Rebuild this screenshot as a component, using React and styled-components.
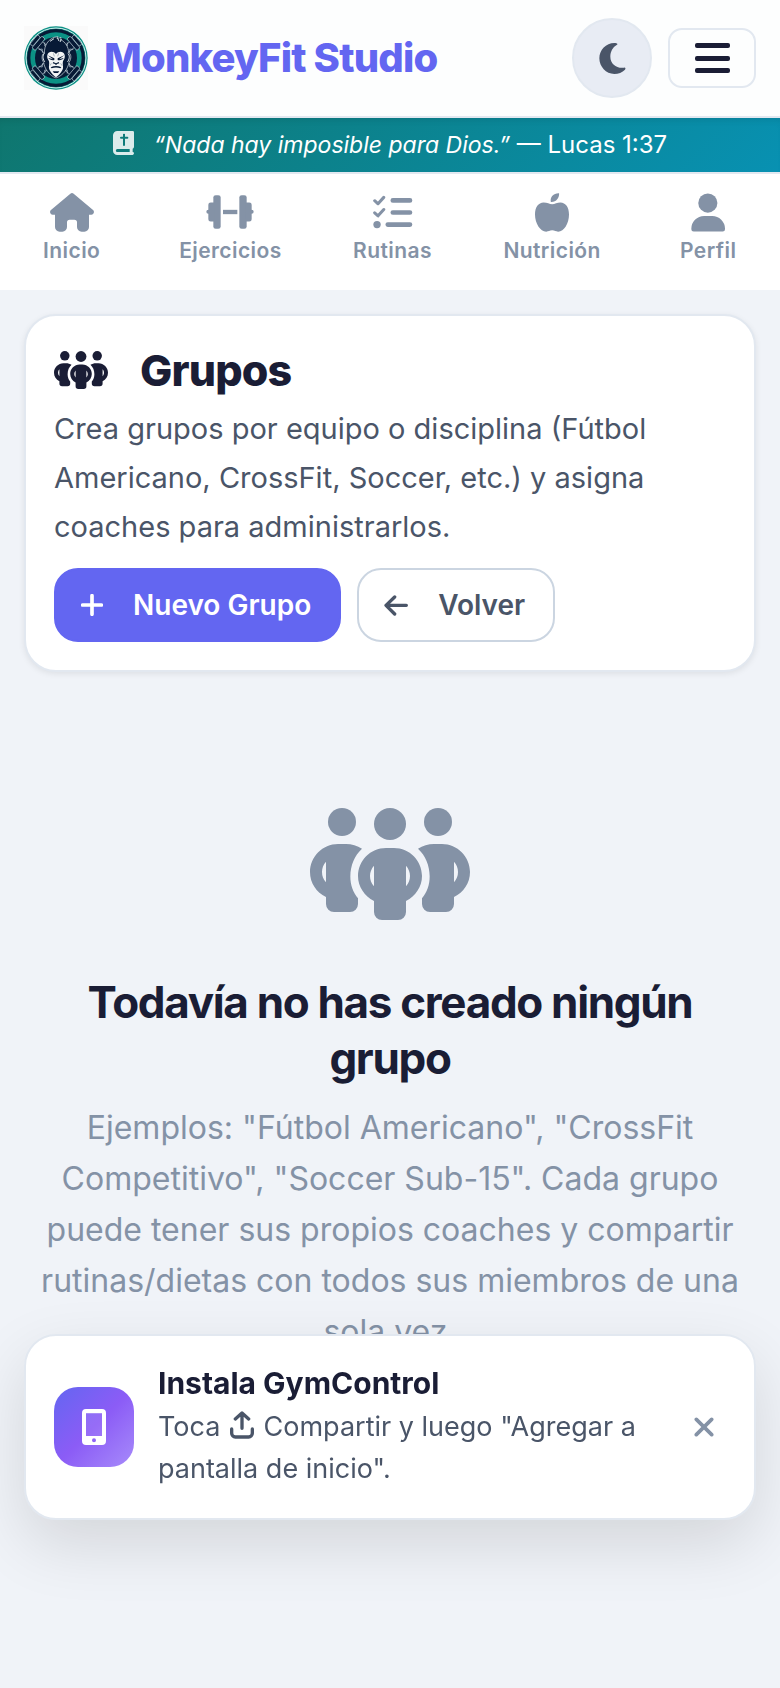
import React from "react";
import styled, { createGlobalStyle } from "styled-components";

const GlobalStyle = createGlobalStyle`
  *, *::before, *::after { box-sizing: border-box; }
  html { background: #f0f3f8; }
  body {
    margin: 0;
    min-height: 100vh;
    background: #f0f3f8;
    color: #1a1d35;
    font-family: Inter, "Liberation Sans", sans-serif;
  }
  button { font-family: inherit; cursor: pointer; }
  h1, h2, p { margin: 0; }
`;

const Icon = styled.svg`
  display: block;
  flex: none;
  width: ${(p) => p.$w}px;
  height: ${(p) => p.$h}px;
  fill: currentColor;
`;

const Header = styled.header`
  display: flex;
  align-items: center;
  gap: 16px;
  padding: 18px 24px;
  background: #fdfefe;
  border-bottom: 2px solid #e2e8f0;
`;

const Brand = styled.a`
  display: flex;
  align-items: center;
  gap: 16px;
  margin-right: auto;
  color: #6366f1;
  font-size: 40px;
  font-weight: 800;
  line-height: 64px;
  letter-spacing: -0.02em;
  text-decoration: none;
  white-space: nowrap;
`;

const ThemeButton = styled.button`
  display: grid;
  place-items: center;
  width: 80px;
  height: 80px;
  padding: 0;
  border: 2px solid #e2e8f0;
  border-radius: 50%;
  background: #e8ecf4;
  color: #4a5568;
`;

const MenuButton = styled.button`
  display: grid;
  place-items: center;
  width: 88px;
  height: 60px;
  padding: 0;
  border: 2px solid #e2e8f0;
  border-radius: 14px;
  background: transparent;
  color: #1a1d35;
`;

const Verse = styled.div`
  display: flex;
  align-items: center;
  justify-content: center;
  gap: 20px;
  height: 56px;
  border-bottom: 2px solid #e2e8f0;
  background: linear-gradient(135deg, #0f766e, #0891b2);
  background-clip: padding-box;
  box-shadow: inset 0 6px 8px -6px rgba(0, 0, 0, 0.15);
  color: #fff;
  font-size: 24px;
  line-height: 36px;

  em { font-size: 23px; }
  svg { margin-bottom: 4px; opacity: 0.85; }
`;

const Nav = styled.nav`
  display: flex;
  justify-content: space-around;
  height: 116px;
  padding-top: 16px;
  background: #fff;
`;

const NavLink = styled.a`
  display: flex;
  flex-direction: column;
  align-items: center;
  min-width: 72px;
  color: #8492a6;
  font-size: 21px;
  font-weight: 600;
  line-height: 34px;
  letter-spacing: 0.02em;
  text-decoration: none;
`;

const NavIcon = styled.span`
  display: grid;
  place-items: center;
  height: 44px;
`;

const Main = styled.main`
  padding: 24px;
`;

const Card = styled.section`
  padding: 28px;
  border: 2px solid #e2e8f0;
  border-radius: 32px;
  background: #fff;
  box-shadow: 0 2px 6px rgba(0, 0, 0, 0.08);
`;

const CardTitle = styled.h1`
  display: flex;
  align-items: center;
  gap: 32px;
  font-size: 43px;
  font-weight: 800;
  line-height: 52px;
  letter-spacing: -0.02em;
`;

const CardText = styled.p`
  margin: 8px 0 17px;
  color: #4a5568;
  font-size: 29px;
  line-height: 49px;
`;

const Actions = styled.div`
  display: flex;
  flex-wrap: wrap;
  gap: 16px;
`;

const ActionButton = styled.button`
  display: flex;
  align-items: center;
  gap: 30px;
  height: 74px;
  padding: 0 28px 0 25px;
  border: 2px solid ${(p) => (p.$primary ? "#6366f1" : "#cbd5e1")};
  border-radius: 24px;
  background: ${(p) => (p.$primary ? "#6366f1" : "#fff")};
  color: ${(p) => (p.$primary ? "#fff" : "#4a5568")};
  font-size: 28px;
  font-weight: 600;
`;

const Empty = styled.section`
  display: flex;
  flex-direction: column;
  align-items: center;
  padding: 136px 12px 200px;
  color: #8492a6;
  text-align: center;
`;

const EmptyTitle = styled.h2`
  margin-top: 54px;
  color: #1a1d35;
  font-size: 44px;
  font-weight: 700;
  line-height: 56px;
  letter-spacing: -0.03em;
`;

const EmptyText = styled.p`
  margin-top: 16px;
  font-size: 32px;
  line-height: 51px;
`;

const Toast = styled.aside`
  position: fixed;
  right: 24px;
  bottom: 168px;
  left: 24px;
  display: flex;
  align-items: center;
  gap: 24px;
  padding: 28px;
  border: 2px solid #e2e8f0;
  border-radius: 32px;
  background: #fff;
  box-shadow: 0 24px 64px rgba(0, 0, 0, 0.12);
`;

const ToastBadge = styled.div`
  display: grid;
  flex: none;
  place-items: center;
  width: 80px;
  height: 80px;
  border-radius: 24px;
  background: linear-gradient(135deg, #6366f1, #8b5cf6 50%, #a78bfa);
  color: #fff;
`;

const ToastBody = styled.div`
  flex: 1;
  min-width: 0;
`;

const ToastTitle = styled.h2`
  margin-bottom: 4px;
  font-size: 30px;
  font-weight: 700;
  line-height: 38px;
`;

const ToastText = styled.p`
  color: #4a5568;
  font-size: 27px;
  line-height: 42px;

  svg { display: inline-block; margin: 0 2px; vertical-align: -3px; }
`;

const CloseButton = styled.button`
  display: grid;
  flex: none;
  place-items: center;
  width: 44px;
  height: 44px;
  padding: 0;
  border: 0;
  background: transparent;
  color: #8492a6;
`;

const Person = () => (
  <path
    fillRule="evenodd"
    d="M114 192h24c17 0 34 5 48 14-22 20-35 50-35 83 0 26 8 48 23 66v17a24 24 0 0 1-24 24h-48a24 24 0 0 1-24-24v-21c-29-14-48-42-48-75 0-46 38-84 84-84zM78 245c-8 9-12 19-12 31s4 22 12 31z"
  />
);

const GroupIcon = ({ w, h }) => (
  <Icon $w={w} $h={h} viewBox="30 84 480 336" aria-hidden="true">
    <circle cx="126" cy="126" r="42" />
    <circle cx="414" cy="126" r="42" />
    <circle cx="270" cy="132" r="48" />
    <Person />
    <g transform="translate(540 0) scale(-1 1)">
      <Person />
    </g>
    <path
      fillRule="evenodd"
      d="M258 204h24c47 0 84 38 84 84 0 32-19 60-48 75v33a24 24 0 0 1-24 24h-48a24 24 0 0 1-24-24v-33c-29-15-48-43-48-75 0-46 37-84 84-84zM222 257c-8 9-12 20-12 31s4 22 12 31zM318 257v62c8-9 12-20 12-31s-4-22-12-31z"
    />
  </Icon>
);

const HouseIcon = () => (
  <Icon $w={44} $h={39} viewBox="150 67 132 117" aria-hidden="true">
    <path d="M211 69q5-4 10 0l59 50c4 5 1 13-6 13h-7v37a14 14 0 0 1-14 14h-8a14 14 0 0 1-14-14v-14a8 8 0 0 0-8-8h-14a8 8 0 0 0-8 8v14a14 14 0 0 1-14 14h-8a14 14 0 0 1-14-14v-37h-7c-7 0-10-8-6-13z" />
  </Icon>
);

const DumbbellIcon = () => (
  <Icon $w={48} $h={34} viewBox="617 75 144 101" aria-hidden="true">
    <rect x="639" y="75" width="22" height="101" rx="7" />
    <rect x="717" y="75" width="22" height="101" rx="7" />
    <path d="M642 97h-11a7 7 0 0 0-7 7v15a6 6 0 0 0 0 12v16a7 7 0 0 0 7 7h11zM736 97h11a7 7 0 0 1 7 7v15a6 6 0 0 1 0 12v16a7 7 0 0 1-7 7h-11z" />
    <rect x="668" y="119" width="43" height="13" />
  </Icon>
);

const ListIcon = () => (
  <Icon $w={40} $h={34} viewBox="1118 73 119 101" aria-hidden="true">
    <g fill="none" stroke="currentColor" strokeLinecap="round" strokeLinejoin="round">
      <path strokeWidth="9" d="M1123 90l10 9 17-19M1123 126l10 9 17-19" />
      <path strokeWidth="14" d="M1177 89h51M1177 125h51M1162 161h66" />
    </g>
    <circle cx="1130" cy="161" r="11" />
  </Icon>
);

const AppleIcon = () => (
  <Icon $w={34} $h={39} viewBox="404 66 103 118" aria-hidden="true">
    <path d="M452 93c-3-15 9-27 25-26 1 15-9 27-25 26zM430 95c-16 0-26 15-26 36 0 27 16 52 34 52 7 0 10-4 18-4s11 4 18 4c18 0 33-25 33-52 0-21-10-36-26-36-10 0-17 5-25 5s-15-5-26-5z" />
  </Icon>
);

const UserIcon = () => (
  <Icon $w={34} $h={39} viewBox="872 67 103 117" aria-hidden="true">
    <circle cx="923" cy="97" r="29" />
    <path d="M912 136h23a39 39 0 0 1 40 40q0 7-7 7h-88q-7 0-7-7a39 39 0 0 1 39-40z" />
  </Icon>
);

const MoonIcon = () => (
  <Icon $w={27} $h={31} viewBox="476 123 81 93" aria-hidden="true">
    <path d="M522 123c-25 0-45 21-45 46s20 47 45 47c12 0 24-5 32-13 3-3 1-7-3-6-22 3-41-11-41-33 0-15 7-28 19-35 4-2 3-6-7-6z" />
  </Icon>
);

const BarsIcon = () => (
  <Icon $w={35} $h={30} viewBox="0 0 35 30" aria-hidden="true">
    <rect width="35" height="5" rx="2" />
    <rect y="13" width="35" height="5" rx="2" />
    <rect y="25" width="35" height="5" rx="2" />
  </Icon>
);

const BibleIcon = () => (
  <Icon $w={21} $h={24} viewBox="333 393 63 72" aria-hidden="true">
    <path
      fillRule="evenodd"
      d="M346 393h46q4 0 4 4v43q0 5-4 6v10q4 0 4 4t-4 5h-46a13 13 0 0 1-13-13v-46a13 13 0 0 1 13-13zM346 447a4 4 0 0 0 0 9h37v-9zM363 402v8h-6q-3 0-3 3t3 3h6v19q0 3 3 3t3-3v-19h7q3 0 3-3t-3-3h-7v-8q-3-2-6 0z"
    />
  </Icon>
);

const PlusIcon = () => (
  <Icon $w={22} $h={22} viewBox="0 0 66 66" aria-hidden="true">
    <path d="M33 5v56M5 33h56" fill="none" stroke="currentColor" strokeWidth="11" strokeLinecap="round" />
  </Icon>
);

const BackIcon = () => (
  <Icon $w={24} $h={21} viewBox="0 0 72 63" aria-hidden="true">
    <path d="M32 6L6 31l26 26M8 31h59" fill="none" stroke="currentColor" strokeWidth="10" strokeLinecap="round" strokeLinejoin="round" />
  </Icon>
);

const PhoneIcon = () => (
  <Icon $w={24} $h={36} viewBox="0 0 72 108" aria-hidden="true">
    <path
      fillRule="evenodd"
      d="M12 0h48a12 12 0 0 1 12 12v84a12 12 0 0 1-12 12H12a12 12 0 0 1-12-12V12A12 12 0 0 1 12 0zM12 13v68h48V13zM36 88a6 6 0 0 0 0 12 6 6 0 0 0 0-12z"
    />
    <path d="M12 13h48v68H12z" opacity="0.1" />
  </Icon>
);

const ShareIcon = () => (
  <Icon $w={24} $h={28} viewBox="0 0 72 84" aria-label="Compartir" role="img">
    <path
      d="M36 52V7M16 24L36 6l20 18M5 54v13a11 11 0 0 0 11 11h40a11 11 0 0 0 11-11V54"
      fill="none"
      stroke="currentColor"
      strokeWidth="10"
      strokeLinecap="round"
      strokeLinejoin="round"
    />
  </Icon>
);

const CloseIcon = () => (
  <Icon $w={20} $h={20} viewBox="0 0 60 60" aria-hidden="true">
    <path d="M7 7l46 46M53 7L7 53" fill="none" stroke="currentColor" strokeWidth="11" strokeLinecap="round" />
  </Icon>
);

const LogoDumbbell = ({ angle }) => (
  <g transform={`rotate(${angle} 96 96)`} fill="#071a36" stroke="#b9c9d2" strokeWidth="2">
    <rect x="85" y="26" width="22" height="46" rx="3" />
    <rect x="73" y="21" width="46" height="13" rx="4" />
    <rect x="78" y="9" width="36" height="11" rx="4" />
    <path d="M82 40l8 7-8 8M110 40l-8 7 8 8" fill="none" />
  </g>
);

const Logo = () => (
  <Icon $w={64} $h={64} viewBox="0 0 192 192" role="img" aria-label="MonkeyFit">
    <rect width="192" height="192" fill="#fafafa" />
    <circle cx="96" cy="96" r="95" fill="#0b9185" />
    <circle cx="96" cy="96" r="90" fill="none" stroke="#d8eeee" strokeWidth="3" />
    <circle cx="96" cy="96" r="87" fill="#071a36" />
    <circle cx="96" cy="96" r="70" fill="none" stroke="#0b9185" strokeWidth="14" />
    <LogoDumbbell angle={-50} />
    <LogoDumbbell angle={50} />
    <LogoDumbbell angle={-130} />
    <LogoDumbbell angle={130} />
    <path
      d="M96 156c-20-7-35-29-37-47-8-10-5-27 2-28 0-24 12-40 29-47l12-2-3 6 12-4-1 7c14 7 24 22 24 40 8 1 9 18 1 28-3 19-18 40-39 47z"
      fill="#071a36"
      stroke="#dbe5e9"
      strokeWidth="2"
    />
    <path d="M62 82c-8 4-5 21 1 26M131 82c8 4 5 21-1 26M90 38l-12 8M101 37l4 8M112 39l-4 9" fill="none" stroke="#dbe5e9" strokeWidth="3" />
    <path d="M96 84c-8-10-23-8-26 3-2 8 2 13 5 19 2 8-1 13 0 21 2 10 13 22 21 27 8-5 19-17 21-27 1-8-2-13 0-21 3-6 7-11 5-19-3-11-18-13-26-3z" fill="#f2f4f5" />
    <path
      d="M71 88l20 9v5c-7 2-15-1-18-6l14 4zM121 88l-20 9v5c7 2 15-1 18-6l-14 4zM88 108l8 4 8-4 2 4-7 2-3 4-3-4-7-2zM80 124c10-5 22-5 32 0l-3 3c-8-3-18-3-26 0zM86 136h20l-4 5H90z"
      fill="#071a36"
    />
    <path d="M91 91l-3-9M101 91l3-9M82 112l-4 7M110 112l4 7" stroke="#82929e" strokeWidth="2" />
  </Icon>
);

const NAV_ITEMS = [
  { label: "Inicio", Glyph: HouseIcon },
  { label: "Ejercicios", Glyph: DumbbellIcon },
  { label: "Rutinas", Glyph: ListIcon },
  { label: "Nutrición", Glyph: AppleIcon },
  { label: "Perfil", Glyph: UserIcon },
];

export default function App() {
  return (
    <>
      <GlobalStyle />
      <Header>
        <Brand href="#">
          <Logo />
          MonkeyFit Studio
        </Brand>
        <ThemeButton type="button" aria-label="Cambiar tema">
          <MoonIcon />
        </ThemeButton>
        <MenuButton type="button" aria-label="Abrir menú">
          <BarsIcon />
        </MenuButton>
      </Header>
      <Verse>
        <BibleIcon />
        <span>
          <em>“Nada hay imposible para Dios.”</em> — Lucas 1:37
        </span>
      </Verse>
      <Nav>
        {NAV_ITEMS.map(({ label, Glyph }) => (
          <NavLink href="#" key={label}>
            <NavIcon>
              <Glyph />
            </NavIcon>
            {label}
          </NavLink>
        ))}
      </Nav>
      <Main>
        <Card>
          <CardTitle>
            <GroupIcon w={54} h={38} />
            Grupos
          </CardTitle>
          <CardText>
            Crea grupos por equipo o disciplina (Fútbol Americano, CrossFit, Soccer, etc.) y asigna coaches para
            administrarlos.
          </CardText>
          <Actions>
            <ActionButton type="button" $primary>
              <PlusIcon />
              Nuevo Grupo
            </ActionButton>
            <ActionButton type="button">
              <BackIcon />
              Volver
            </ActionButton>
          </Actions>
        </Card>
        <Empty>
          <GroupIcon w={160} h={112} />
          <EmptyTitle>Todavía no has creado ningún grupo</EmptyTitle>
          <EmptyText>
            Ejemplos: "Fútbol Americano", "CrossFit Competitivo", "Soccer Sub-15". Cada grupo puede tener sus propios
            coaches y compartir rutinas/dietas con todos sus miembros de una sola vez.
          </EmptyText>
        </Empty>
      </Main>
      <Toast>
        <ToastBadge>
          <PhoneIcon />
        </ToastBadge>
        <ToastBody>
          <ToastTitle>Instala GymControl</ToastTitle>
          <ToastText>
            Toca <ShareIcon /> Compartir y luego "Agregar a pantalla de inicio".
          </ToastText>
        </ToastBody>
        <CloseButton type="button" aria-label="Cerrar">
          <CloseIcon />
        </CloseButton>
      </Toast>
    </>
  );
}
